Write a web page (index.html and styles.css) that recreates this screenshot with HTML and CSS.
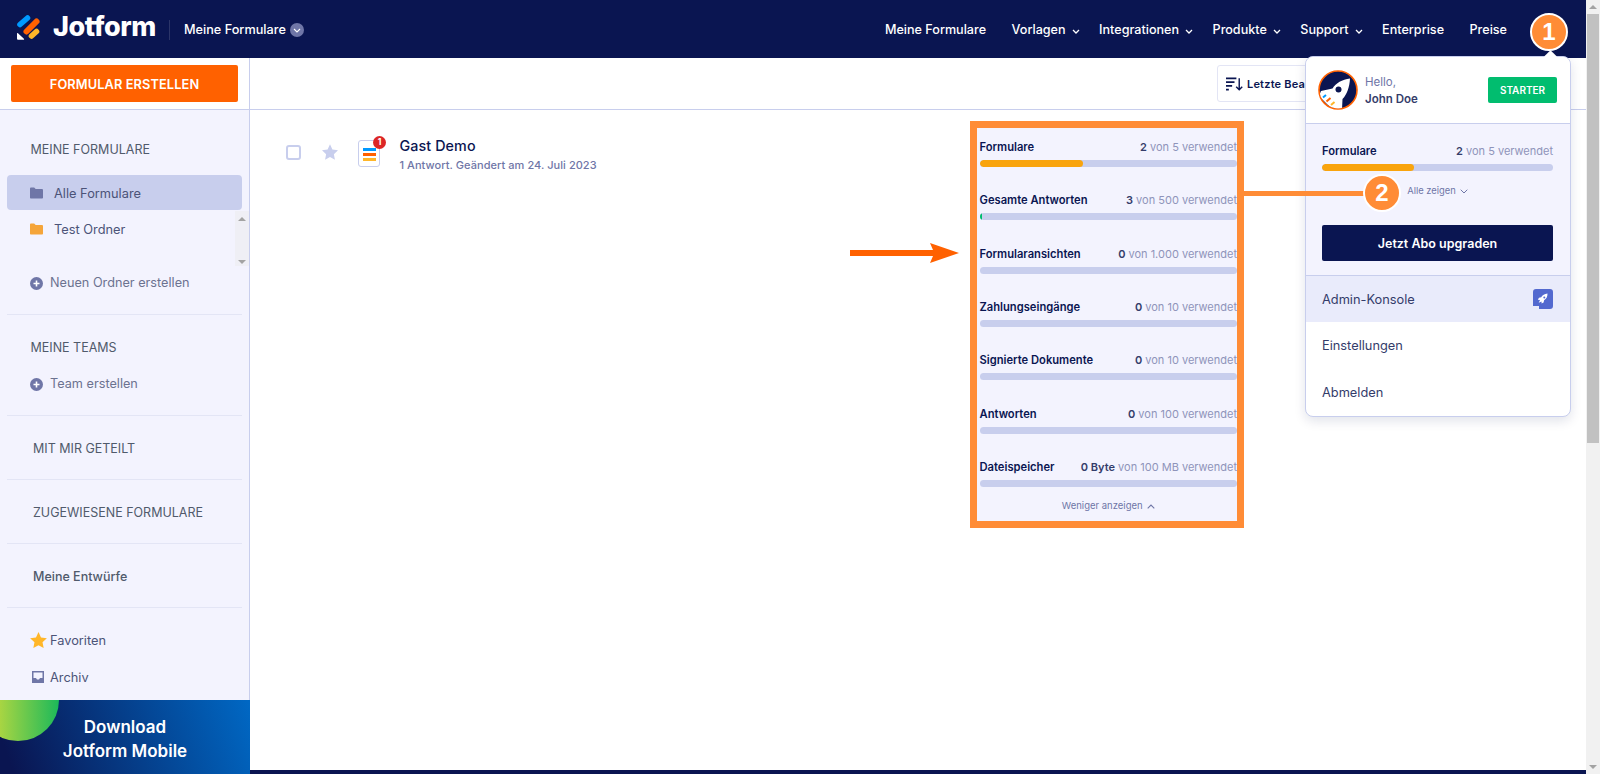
FILE: index.html
```html
<!DOCTYPE html>
<html lang="de">
<head>
<meta charset="utf-8">
<title>Jotform – Meine Formulare</title>
<link rel="stylesheet" href="styles.css">
</head>
<body>
<div class="shell">
  <div class="page">
    <header class="nav">
      <div class="brand">
        <svg class="logo" width="26" height="26" viewBox="0 0 26 26"><path d="M4 9.500 11.500 3" stroke="#0099ff" stroke-width="5.600" stroke-linecap="round"/><path d="M10.500 16.500 20.500 6.500" stroke="#ff6100" stroke-width="6" stroke-linecap="round"/><path d="M15.500 21 20.500 16.500" stroke="#ffb629" stroke-width="5.600" stroke-linecap="round"/><path d="M1 18.500v5c0 .8.500 1.300 1.300 1.300h5.200c.6 0 .8-.6.4-1L2 18.200c-.4-.4-1-.2-1 .3z" fill="#fff"/></svg>
        <span class="wordmark">Jotform</span>
        <span class="brand-sep"></span>
        <span class="brand-page">Meine Formulare</span>
        <span class="brand-chev"><svg width="8" height="5" viewBox="0 0 8 5"><path d="M1 1l3 3 3-3" fill="none" stroke="#fff" stroke-width="1.100"/></svg></span>
      </div>
      <nav class="nav-links">
        <a class="nav-link plain">Meine Formulare</a>
        <a class="nav-link">Vorlagen <svg class="chev" width="8" height="5" viewBox="0 0 8 5"><path d="M1 1l3 3 3-3" fill="none" stroke="#fff" stroke-width="1.300"/></svg></a>
        <a class="nav-link">Integrationen <svg class="chev" width="8" height="5" viewBox="0 0 8 5"><path d="M1 1l3 3 3-3" fill="none" stroke="#fff" stroke-width="1.300"/></svg></a>
        <a class="nav-link">Produkte <svg class="chev" width="8" height="5" viewBox="0 0 8 5"><path d="M1 1l3 3 3-3" fill="none" stroke="#fff" stroke-width="1.300"/></svg></a>
        <a class="nav-link">Support <svg class="chev" width="8" height="5" viewBox="0 0 8 5"><path d="M1 1l3 3 3-3" fill="none" stroke="#fff" stroke-width="1.300"/></svg></a>
        <a class="nav-link plain">Enterprise</a>
        <a class="nav-link">Preise</a>
      </nav>
    </header>

    <div class="workspace">
      <aside class="sidebar">
        <div class="create-wrap"><button class="create-btn">FORMULAR ERSTELLEN</button></div>

        <section class="side-sec sec-forms">
          <h3 class="side-title">MEINE FORMULARE</h3>
          <div class="side-folder active">
            <svg width="13" height="12" viewBox="0 0 14 12"><path d="M0 1.200C0 .5.500 0 1.200 0h3.300l1.600 1.800h6.700c.7 0 1.200.5 1.200 1.200v7.800c0 .7-.5 1.200-1.200 1.200H1.200C.5 12 0 11.500 0 10.800z" fill="#6f76a7"/></svg>
            <span>Alle Formulare</span>
          </div>
          <div class="side-folder">
            <svg width="13" height="12" viewBox="0 0 14 12"><path d="M0 1.200C0 .5.500 0 1.200 0h3.300l1.600 1.800h6.700c.7 0 1.200.5 1.200 1.200v7.800c0 .7-.5 1.200-1.200 1.200H1.200C.5 12 0 11.500 0 10.800z" fill="#f5a53a"/></svg>
            <span>Test Ordner</span>
          </div>
          <div class="side-track"><i class="tri-up"></i><i class="tri-down"></i></div>
          <div class="side-action add-folder">
            <svg width="13" height="13" viewBox="0 0 13 13"><circle cx="6.500" cy="6.500" r="6.500" fill="#6f76a7"/><path d="M6.500 3.500v6M3.500 6.500h6" stroke="#fff" stroke-width="1.600"/></svg>
            <span>Neuen Ordner erstellen</span>
          </div>
        </section>

        <section class="side-sec sec-teams">
          <h3 class="side-title">MEINE TEAMS</h3>
          <div class="side-action team-add">
            <svg width="13" height="13" viewBox="0 0 13 13"><circle cx="6.500" cy="6.500" r="6.500" fill="#6f76a7"/><path d="M6.500 3.500v6M3.500 6.500h6" stroke="#fff" stroke-width="1.600"/></svg>
            <span>Team erstellen</span>
          </div>
        </section>

        <section class="side-sec sec-single"><h3 class="side-title inset">MIT MIR GETEILT</h3></section>
        <section class="side-sec sec-single"><h3 class="side-title inset">ZUGEWIESENE FORMULARE</h3></section>
        <section class="side-sec sec-single"><h3 class="side-title inset medium">Meine Entwürfe</h3></section>

        <section class="side-sec sec-last">
          <div class="side-link">
            <svg class="star-ic" width="17" height="16" viewBox="0 0 24 23"><path d="M12 0l3.600 7.900 8.400 1-6.200 5.800 1.600 8.300L12 18.900 4.600 23l1.600-8.300L0 8.900l8.400-1z" fill="#ffb629"/></svg>
            <span>Favoriten</span>
          </div>
          <div class="side-link archive">
            <svg class="arch-ic" width="12" height="12" viewBox="0 0 12 12"><path d="M0 0h12v12H0z" fill="#6f76a7"/><path d="M1.500 1.500h9v5.500H8L7 8.500H5L4 7H1.500z" fill="#f3f3fe"/></svg>
            <span>Archiv</span>
          </div>
        </section>

        <div class="promo">
          <span class="promo-blob"></span>
          <p class="promo-text">Download<br>Jotform Mobile</p>
        </div>
      </aside>

      <main class="content">
        <div class="toolbar">
          <button class="sort-btn">
            <svg width="17" height="14" viewBox="0 0 18 14"><path d="M0 1h11M0 5h9M0 9h6.500M0 13h3" stroke="#0a1551" stroke-width="1.800"/><path d="M14 1v12M10.800 9.800 14 13l3.200-3.200" fill="none" stroke="#0a1551" stroke-width="1.500"/></svg>
            <span>Letzte Bearbeitung</span>
          </button>
        </div>
        <div class="form-row">
          <span class="check"></span>
          <svg class="row-star" width="16" height="16" viewBox="0 0 24 23"><path d="M12 0l3.600 7.900 8.400 1-6.200 5.800 1.600 8.300L12 18.900 4.600 23l1.600-8.300L0 8.900l8.400-1z" fill="#c8ceed"/></svg>
          <span class="form-icon">
            <i class="fl blue"></i><i class="fl orange"></i><i class="fl yellow"></i>
            <b class="form-badge">1</b>
          </span>
          <div class="form-text">
            <div class="form-title">Gast Demo</div>
            <div class="form-sub">1 Antwort. Geändert am 24. Juli 2023</div>
          </div>
        </div>
        <div class="content-spacer"></div>
        <div class="bottom-strip"></div>
      </main>
    </div>

    <div class="dropdown">
      <span class="dd-arrow"></span>
      <div class="dd-head">
        <svg class="avatar" width="40" height="40" viewBox="0 0 40 40">
          <defs><clipPath id="av"><circle cx="20" cy="20" r="18.500"/></clipPath></defs>
          <circle cx="20" cy="20" r="19" fill="#0a1551" stroke="#ff6100" stroke-width="1.600"/>
          <g clip-path="url(#av)">
            <path d="M32 8.500C24 9.500 18 13 14.500 18.500L3 21l-2 5 9 9 8 6 6-1 .5-11C29 24.500 31.500 17 32 8.500z" fill="#fff"/>
            <circle cx="20.500" cy="19.500" r="3" fill="#0a1551"/>
            <path d="M5 27.500l3-2.500" stroke="#0099ff" stroke-width="2"/>
            <path d="M8.500 31.500l4-3.500" stroke="#ff6100" stroke-width="2"/>
            <path d="M13 35l3.500-3" stroke="#ffb629" stroke-width="2"/>
          </g>
        </svg>
        <div class="dd-user">
          <div class="dd-hello">Hello,</div>
          <div class="dd-name">John Doe</div>
        </div>
        <span class="plan">STARTER</span>
      </div>
      <div class="dd-body">
        <div class="usage">
          <div class="usage-head"><span class="usage-name">Formulare</span><span class="usage-val"><b>2</b> von 5 verwendet</span></div>
          <div class="usage-bar"><div class="usage-fill amber" style="width:40%"></div></div>
        </div>
        <div class="show-all">Alle zeigen <svg width="8" height="5" viewBox="0 0 8 5"><path d="M.7.700 4 4 7.300.700" fill="none" stroke="#6f76a7" stroke-width="1"/></svg></div>
        <button class="upgrade">Jetzt Abo upgraden</button>
      </div>
      <div class="dd-item hovered">
        <span>Admin-Konsole</span>
        <span class="admin-ic">
          <svg width="20" height="20" viewBox="0 0 20 20"><path d="M3 0h14a3 3 0 0 1 3 3v14a3 3 0 0 1-3 3H6v-3H0V3a3 3 0 0 1 3-3z" fill="#5369cf"/><path d="M14.500 4.500c-3 .3-5 1.700-6.300 3.800l-2.200.5-1.200 2 2.200.1-1.300 2.800 2.800-1.300.1 2.200 2-1.200.5-2.200c2.100-1.300 3.500-3.300 3.400-6.700z" fill="#fff"/><circle cx="11.300" cy="8.600" r="1" fill="#5369cf"/></svg>
        </span>
      </div>
      <div class="dd-item">Einstellungen</div>
      <div class="dd-item">Abmelden</div>
    </div>

    <div class="callout-box">
      <div class="usage">
        <div class="usage-head"><span class="usage-name">Formulare</span><span class="usage-val"><b>2</b> von 5 verwendet</span></div>
        <div class="usage-bar"><div class="usage-fill amber" style="width:40%"></div></div>
      </div>
      <div class="usage">
        <div class="usage-head"><span class="usage-name">Gesamte Antworten</span><span class="usage-val"><b>3</b> von 500 verwendet</span></div>
        <div class="usage-bar"><div class="usage-fill green" style="width:1%"></div></div>
      </div>
      <div class="usage">
        <div class="usage-head"><span class="usage-name">Formularansichten</span><span class="usage-val"><b>0</b> von 1.000 verwendet</span></div>
        <div class="usage-bar"></div>
      </div>
      <div class="usage">
        <div class="usage-head"><span class="usage-name">Zahlungseingänge</span><span class="usage-val"><b>0</b> von 10 verwendet</span></div>
        <div class="usage-bar"></div>
      </div>
      <div class="usage">
        <div class="usage-head"><span class="usage-name">Signierte Dokumente</span><span class="usage-val"><b>0</b> von 10 verwendet</span></div>
        <div class="usage-bar"></div>
      </div>
      <div class="usage">
        <div class="usage-head"><span class="usage-name">Antworten</span><span class="usage-val"><b>0</b> von 100 verwendet</span></div>
        <div class="usage-bar"></div>
      </div>
      <div class="usage">
        <div class="usage-head"><span class="usage-name">Dateispeicher</span><span class="usage-val"><b>0 Byte</b> von 100 MB verwendet</span></div>
        <div class="usage-bar"></div>
      </div>
      <div class="show-less">Weniger anzeigen <svg width="8" height="5" viewBox="0 0 8 5"><path d="M.7 4.300 4 1l3.300 3.300" fill="none" stroke="#6f76a7" stroke-width="1.100"/></svg></div>
    </div>

    <svg class="callout-arrow" width="109" height="20" viewBox="0 0 109 20"><path d="M0 7h83L80 0l29 10-29 10 3-7H0z" fill="#ff6100"/></svg>
    <span class="callout-line"></span>
    <span class="step step-one">1</span>
    <span class="step step-two">2</span>
  </div>

  <div class="scrollbar">
    <span class="sb-btn"><i class="sb-up"></i></span>
    <span class="sb-thumb"></span>
    <span class="sb-rest"></span>
    <span class="sb-btn"><i class="sb-down"></i></span>
  </div>
</div>
</body>
</html>
```
FILE: styles.css
```css
* { box-sizing: border-box; }
html, body { margin: 0; height: 100%; overflow: hidden; }
body { font-family: Inter, "Noto Sans", sans-serif; color: #0a1551; background: #fff; }
h3, p { margin: 0; }
button { font-family: inherit; border: 0; padding: 0; }

.shell { display: flex; width: 1600px; height: 774px; }
.page { position: relative; width: 1586px; height: 774px; display: flex; flex-direction: column; overflow: hidden; }

/* top bar */
.nav { height: 58px; flex: none; background: #0a1551; display: flex; align-items: center; justify-content: space-between; padding: 2px 79px 0 16px; color: #fff; }
.brand { display: flex; align-items: center; }
.logo { margin-top: -4px; }
.wordmark { margin-left: 11px; font-size: 27px; font-weight: 800; letter-spacing: -0.4px; line-height: 32px; margin-top: -6px; }
.brand-sep { width: 1px; height: 20px; margin: 0 14px 0 13px; background: #2b3468; }
.brand-page { font-size: 12.700px; font-weight: 500; line-height: 20px; }
.brand-chev { width: 14px; height: 14px; margin-left: 4px; border-radius: 50%; background: #6f76a7; display: flex; align-items: center; justify-content: center; }
.nav-links { display: flex; align-items: center; gap: 19.500px; }
.nav-link { display: flex; align-items: center; gap: 6px; font-size: 12.600px; font-weight: 500; line-height: 20px; white-space: nowrap; }
.nav-link.plain { margin-right: 6px; }
.chev { margin-top: 2px; }

/* layout */
.workspace { flex: 1; display: flex; min-height: 0; }

/* sidebar */
.sidebar { width: 250px; flex: none; display: flex; flex-direction: column; background: #f3f3fe; border-right: 1px solid #c8ceed; }
.create-wrap { height: 52px; flex: none; padding: 7px 11px 0; background: #fff; border-bottom: 1px solid #c8ceed; }
.create-btn { width: 227px; height: 37px; padding-top: 1px; background: #ff6100; color: #fff; font-size: 12.800px; font-weight: 600; border-radius: 2px; letter-spacing: .1px; }
.side-sec { position: relative; margin: 0 7px; border-bottom: 1px solid #e3e5f5; flex: none; }
.side-title { font-size: 12.500px; font-weight: 400; line-height: 20px; color: #505a6b; padding-left: 23.500px; }
.side-title.inset { padding-left: 26px; }
.side-title.medium { font-weight: 500; }
.sec-forms { height: 205px; padding-top: 30px; }
.side-folder { display: flex; align-items: center; height: 36px; margin-top: 1px; padding-left: 23px; gap: 11px; font-size: 12.800px; color: #4c5378; border-radius: 4px; }
.sec-forms .side-title + .side-folder { margin-top: 15px; }
.side-folder.active { height: 35px; padding-top: 1px; background: #c8ceed; }
.side-track { position: absolute; top: 101px; right: -7px; width: 14px; height: 55px; background: #efeff5; }
.tri-up, .tri-down { position: absolute; left: 3px; width: 0; height: 0; border-left: 4px solid transparent; border-right: 4px solid transparent; }
.tri-up { top: 6px; border-bottom: 4px solid #a3a3a3; }
.tri-down { bottom: 2px; border-top: 4px solid #a3a3a3; }
.side-action { display: flex; align-items: center; gap: 7px; padding-left: 23px; font-size: 12.700px; line-height: 20px; color: #6c7290; }
.add-folder { margin-top: 26px; }
.team-add { margin-top: 16px; }
.sec-teams { height: 101px; padding-top: 23px; }
.sec-single { height: 64px; padding-top: 23px; }
.sec-last { flex: 1; border-bottom: 0; padding-top: 22px; }
.side-link { display: flex; align-items: center; gap: 3px; padding-left: 23px; height: 20px; font-size: 12.800px; color: #4c5378; }
.side-link.archive { margin-top: 17px; gap: 6px; padding-left: 25px; }
.promo { position: relative; height: 74px; flex: none; margin-right: -1px; overflow: hidden; background: linear-gradient(70deg, #0a1551 5%, #0068c4 100%); color: #fff; }
.promo-blob { position: absolute; left: -23px; top: -41px; width: 82px; height: 82px; border-radius: 50%; background: linear-gradient(90deg, #b8d840 20%, #1cb95a 100%); }
.promo-text { position: relative; padding-top: 15px; text-align: center; font-size: 17px; line-height: 24px; font-weight: 600; }

/* content */
.content { flex: 1; min-width: 0; display: flex; flex-direction: column; background: #fff; }
.toolbar { height: 52px; flex: none; display: flex; justify-content: flex-end; padding: 7px 199px 0 0; border-bottom: 1px solid #c8ceed; }
.sort-btn { width: 170px; height: 37px; display: flex; align-items: center; gap: 4px; padding-left: 8px; background: #fff; border: 1px solid #e3e5f5; border-radius: 3px; font-size: 11px; font-weight: 600; letter-spacing: .2px; color: #0a1551; white-space: nowrap; overflow: hidden; }
.form-row { display: flex; align-items: flex-start; gap: 20.500px; padding: 25px 0 0 36px; }
.check { width: 15px; height: 15px; margin-top: 10px; border: 2px solid #c8ceed; border-radius: 3px; background: #fff; }
.row-star { margin-top: 9px; }
.form-icon { position: relative; width: 22px; height: 27px; margin-top: 5px; padding: 7px 3px 0 4px; border: 1px solid #c8ceed; border-radius: 3px; display: flex; flex-direction: column; gap: 2.500px; }
.fl { display: block; height: 2.500px; flex: none; }
.fl.blue { background: #0099ff; }
.fl.orange { background: #ff6100; }
.fl.yellow { background: #ffb629; }
.form-badge { position: absolute; top: -5px; right: -7px; width: 13px; height: 13px; border-radius: 50%; background: #dc2626; color: #fff; font-size: 8.500px; line-height: 13px; text-align: center; font-weight: 700; }
.form-text { padding-top: 1px; margin-left: -1px; }
.form-title { font-size: 14.300px; font-weight: 500; line-height: 20px; color: #0a1551; letter-spacing: .1px; }
.form-sub { margin-top: 1px; font-size: 11px; font-weight: 500; line-height: 16px; color: #6f76a7; letter-spacing: .05px; }
.content-spacer { flex: 1; }
.bottom-strip { height: 4px; flex: none; background: #0a1551; }

/* account dropdown */
.dropdown { position: absolute; left: 1305px; top: 56px; width: 266px; height: 361px; background: #fff; border: 1px solid #c8ceed; border-radius: 8px; box-shadow: 0 4px 12px rgba(10, 21, 81, .12); }
.dd-arrow { position: absolute; top: -5px; left: 240px; width: 9px; height: 9px; background: #fff; transform: rotate(45deg); }
.dd-head { position: relative; height: 67px; display: flex; align-items: center; padding: 0 13px 0 12px; border-bottom: 1px solid #c8ceed; border-radius: 8px 8px 0 0; background: #fff; }
.dd-user { margin-left: 7px; flex: 1; padding-top: 1px; }
.dd-hello { font-size: 11.500px; line-height: 16px; color: #6f76a7; }
.dd-name { margin-top: 1px; font-size: 11.500px; line-height: 16px; font-weight: 600; color: #343c6a; }
.plan { width: 69px; height: 26px; border-radius: 2px; background: #01bd6f; color: #fff; font-size: 10px; font-weight: 600; line-height: 26px; text-align: center; }
.dd-body { height: 152px; padding: 20px 17px 0 16px; background: #f3f3fe; border-bottom: 1px solid #c8ceed; }
.show-all { display: flex; align-items: center; justify-content: center; gap: 4px; margin-top: 13px; height: 14px; font-size: 9.400px; line-height: 14px; color: #6f76a7; }
.upgrade { display: block; width: 231px; height: 36px; margin-top: 27px; border-radius: 2px; background: #0a1551; color: #fff; font-size: 12.500px; font-weight: 600; }
.dd-item { display: flex; align-items: center; justify-content: space-between; height: 47px; padding: 0 17px 0 16px; font-size: 12.800px; color: #343c6a; }
.dd-item.hovered { height: 46px; background: #e9ebfb; }
.admin-ic { width: 20px; height: 20px; display: flex; }

/* usage meters */
.usage-head { display: flex; justify-content: space-between; align-items: center; height: 14px; white-space: nowrap; }
.usage-name { font-size: 11.200px; font-weight: 600; color: #0a1551; }
.usage-val { font-size: 11px; color: #8f94ba; }
.usage-val b { font-weight: 600; color: #343c6a; }
.usage-bar { height: 7px; margin-top: 6px; border-radius: 4px; background: #c8ceed; overflow: hidden; }
.usage-fill { height: 100%; border-radius: 4px; }
.usage-fill.amber { background: #f9a40d; }
.usage-fill.green { background: #01bd6f; }

/* annotations */
.callout-box { position: absolute; left: 970px; top: 121px; width: 274px; height: 407px; padding: 12px 0 0 2.500px; background: #f3f3fe; border: 7px solid #ff8c36; display: flex; flex-direction: column; gap: 26.330px; overflow: hidden; }
.show-less { display: flex; align-items: center; justify-content: center; gap: 4px; margin-top: -14px; font-size: 9.500px; line-height: 14px; color: #6f76a7; }
.callout-arrow { position: absolute; left: 850px; top: 243px; }
.callout-line { position: absolute; left: 1244px; top: 191px; width: 125px; height: 5px; background: #ff8c36; }
.step { position: absolute; width: 38px; height: 38px; border-radius: 50%; border: 2px solid #fff; background: #ff8c36; color: #fff; font-family: "Liberation Sans", sans-serif; font-size: 24px; font-weight: 700; line-height: 34px; text-align: center; }
.step-one { left: 1530px; top: 13px; }
.step-two { left: 1363px; top: 174px; }

/* window scrollbar */
.scrollbar { width: 14px; height: 774px; flex: none; display: flex; flex-direction: column; background: #f1f1f1; }
.sb-btn { height: 14px; flex: none; display: flex; align-items: center; justify-content: center; }
.sb-up, .sb-down { width: 0; height: 0; border-left: 4px solid transparent; border-right: 4px solid transparent; }
.sb-up { border-bottom: 4px solid #a3a3a3; }
.sb-down { border-top: 4px solid #a3a3a3; }
.sb-thumb { height: 429px; flex: none; margin: 0 1px; background: #c1c1c1; }
.sb-rest { flex: 1; }
```
